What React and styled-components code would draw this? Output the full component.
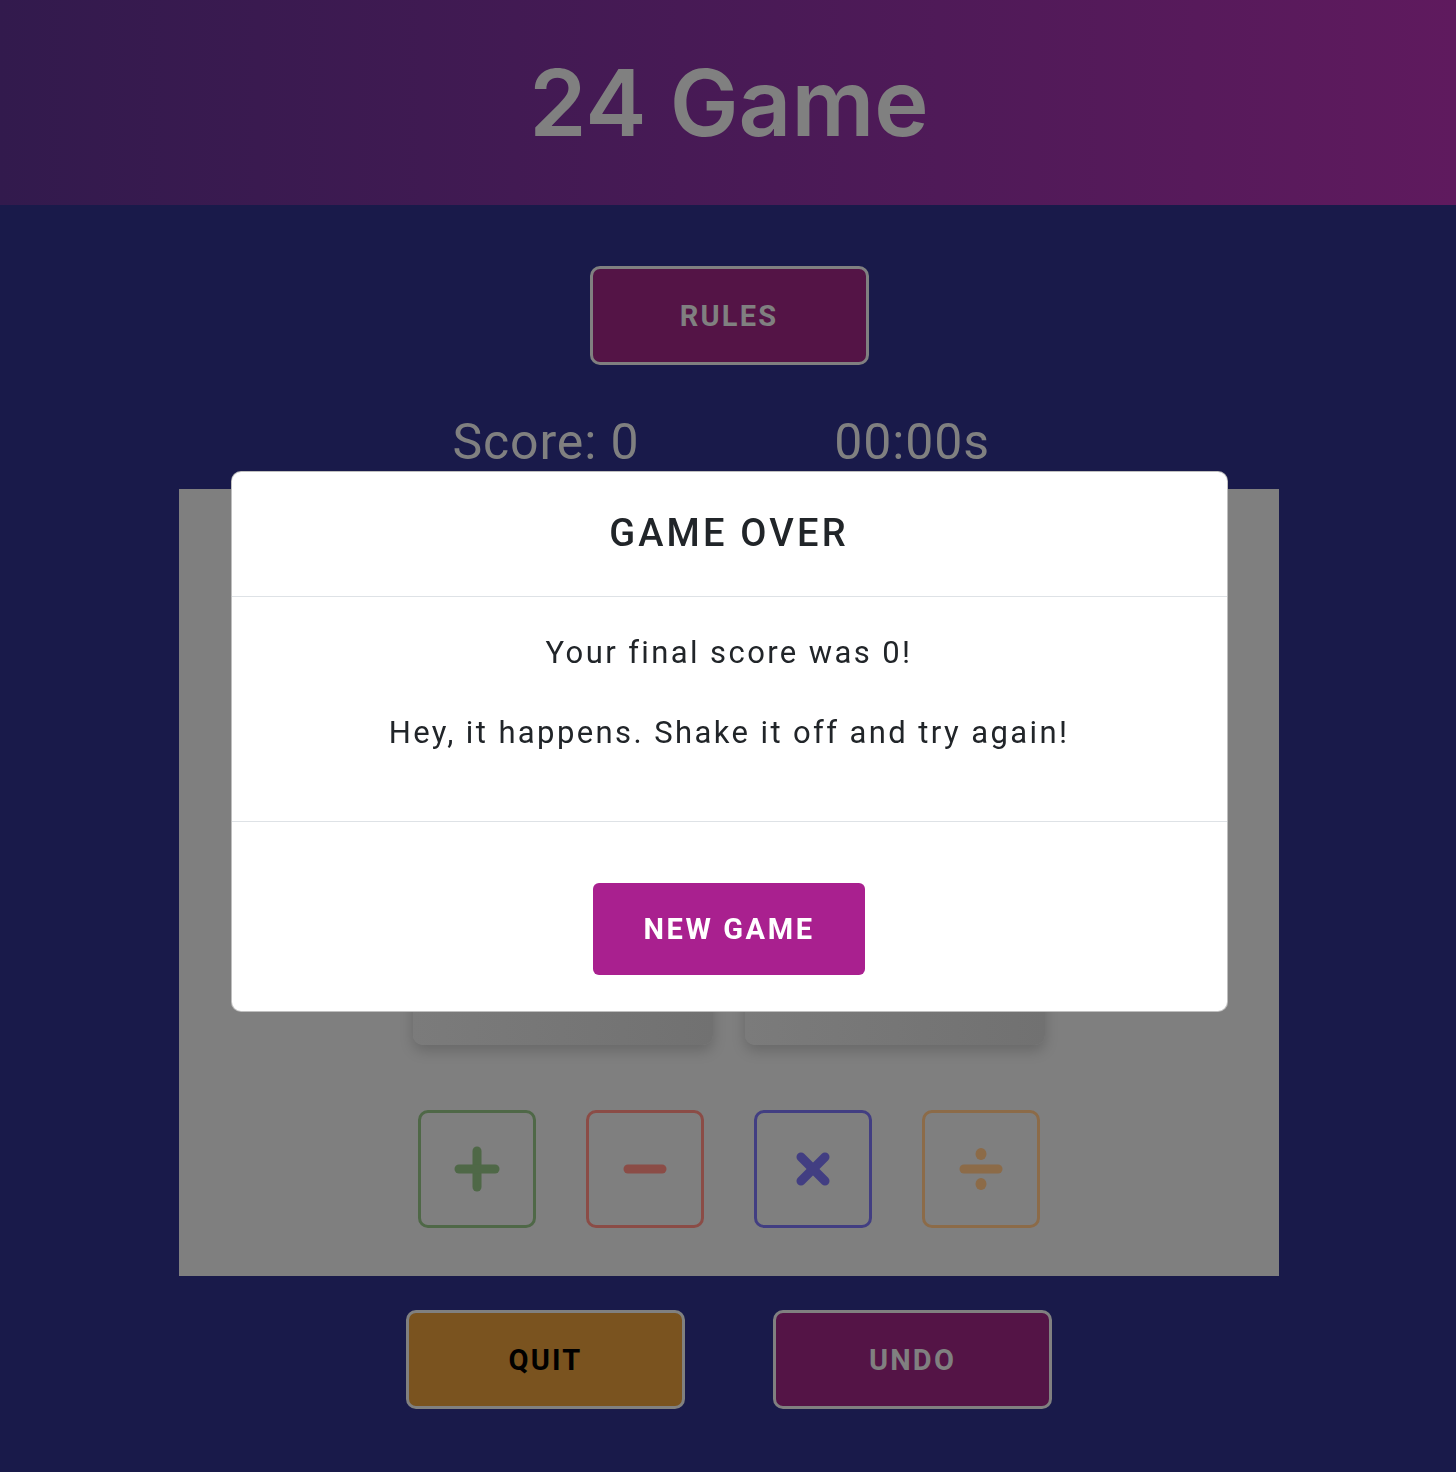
import React from "react";
import styled, { createGlobalStyle } from "styled-components";

const GlobalStyle = createGlobalStyle`
  body {
    margin: 0;
    background: #191a4a;
    font-family: Roboto, "Liberation Sans", sans-serif;
  }
`;

const Page = styled.div`
  min-height: 1472px;
  background: #191a4a;
`;

const Header = styled.header`
  height: 205px;
  display: flex;
  align-items: center;
  justify-content: center;
  padding-left: 2px;
  box-sizing: border-box;
  background: linear-gradient(to right, #321a4d, #5f1a5e);
`;

const Title = styled.h1`
  margin: 0;
  font-family: Inter, "Noto Sans", sans-serif;
  font-size: 92px;
  font-weight: 600;
  color: #808080;
  letter-spacing: 0;
`;

const Main = styled.main`
  display: flex;
  flex-direction: column;
  align-items: center;
  padding-left: 2px;
`;

const BigButton = styled.button`
  width: 279px;
  height: 99px;
  border: 3px solid #808080;
  border-radius: 10px;
  background: ${(p) => p.$bg};
  color: ${(p) => p.$fg};
  font-family: Roboto, sans-serif;
  font-size: 29px;
  font-weight: 700;
  letter-spacing: 2.2px;
  cursor: pointer;
`;

const RulesWrap = styled.div`
  margin-top: 61px;
`;

const ScoreRow = styled.div`
  margin-top: 47px;
  display: flex;
  gap: 66px;
`;

const Stat = styled.div`
  width: 300px;
  text-align: center;
  font-size: 50px;
  line-height: 60px;
  letter-spacing: 0.9px;
  color: #808080;
`;

const Board = styled.section`
  margin-top: 17px;
  width: 1100px;
  height: 787px;
  box-sizing: border-box;
  padding-top: 124px;
  background: #7f7f7f;
  display: flex;
  flex-direction: column;
  align-items: center;
`;

const CardGrid = styled.div`
  display: grid;
  grid-template-columns: 300px 300px;
  grid-auto-rows: 200px;
  gap: 32px;
`;

const Card = styled.div`
  border-radius: 10px;
  background: linear-gradient(to right, #7b7b7b, #717171);
  box-shadow: 0 6px 14px rgba(0, 0, 0, 0.18);
`;

const OpRow = styled.div`
  margin-top: 65px;
  display: flex;
  gap: 50px;
`;

const OpButton = styled.button`
  width: 118px;
  height: 118px;
  box-sizing: border-box;
  border: 3px solid ${(p) => p.$color};
  border-radius: 10px;
  background: transparent;
  display: flex;
  align-items: center;
  justify-content: center;
  padding: 0;
`;

const Controls = styled.div`
  margin-top: 34px;
  display: flex;
  gap: 88px;
`;

const Backdrop = styled.div`
  position: fixed;
  inset: 0;
  display: flex;
  justify-content: center;
  align-items: flex-start;
  padding-top: 471px;
  padding-left: 2px;
`;

const Modal = styled.div`
  width: 997px;
  background: #fff;
  border-radius: 10px;
  border: 1px solid rgba(0, 0, 0, 0.25);
  box-sizing: border-box;
  color: #212529;
  overflow: hidden;
`;

const ModalHeader = styled.div`
  height: 125px;
  box-sizing: border-box;
  padding-bottom: 2px;
  display: flex;
  align-items: center;
  justify-content: center;
  border-bottom: 1px solid #dee2e6;
`;

const ModalTitle = styled.h2`
  margin: 0;
  font-size: 38px;
  font-weight: 500;
  letter-spacing: 3.2px;
`;

const ModalBody = styled.div`
  padding: 33px 16px 31px;
  text-align: center;
  border-bottom: 1px solid #dee2e6;
`;

const Message = styled.p`
  margin: 0 0 35px;
  font-size: 31px;
  line-height: 45px;
  letter-spacing: 2.4px;
`;

const ModalFooter = styled.div`
  display: flex;
  justify-content: center;
  padding: 61px 0 36px;
`;

const NewGame = styled.button`
  width: 272px;
  height: 92px;
  border: none;
  border-radius: 6px;
  background: #a9208f;
  color: #fff;
  font-family: Roboto, sans-serif;
  font-size: 29px;
  font-weight: 700;
  letter-spacing: 2.6px;
`;

const OpIcon = ({ type, color }) => (
  <svg width="48" height="48" viewBox="0 0 48 48" fill="none" stroke={color} strokeWidth="9" strokeLinecap="round">
    {type === "add" && (
      <>
        <path d="M24 6v36" />
        <path d="M6 24h36" />
      </>
    )}
    {type === "sub" && <path d="M7 24h34" />}
    {type === "mul" && (
      <>
        <path d="M12 12l24 24" />
        <path d="M36 12L12 36" />
      </>
    )}
    {type === "div" && (
      <>
        <path d="M7 24h34" />
        <ellipse cx="24" cy="9" rx="5.5" ry="6" fill={color} stroke="none" />
        <ellipse cx="24" cy="39" rx="5.5" ry="6" fill={color} stroke="none" />
      </>
    )}
  </svg>
);

const ops = [
  { type: "add", color: "#4f6847" },
  { type: "sub", color: "#8b4c46" },
  { type: "mul", color: "#423e82" },
  { type: "div", color: "#8c6b48" },
];

const App = () => {
  return (
    <Page>
      <GlobalStyle />
      <Header>
        <Title>24 Game</Title>
      </Header>
      <Main>
        <RulesWrap>
          <BigButton $bg="#541446" $fg="#808080">RULES</BigButton>
        </RulesWrap>
        <ScoreRow>
          <Stat>Score: 0</Stat>
          <Stat>00:00s</Stat>
        </ScoreRow>
        <Board>
          <CardGrid>
            {[0, 1, 2, 3].map((i) => (
              <Card key={i} />
            ))}
          </CardGrid>
          <OpRow>
            {ops.map((op) => (
              <OpButton key={op.type} $color={op.color}>
                <OpIcon type={op.type} color={op.color} />
              </OpButton>
            ))}
          </OpRow>
        </Board>
        <Controls>
          <BigButton $bg="#7a531f" $fg="#000">QUIT</BigButton>
          <BigButton $bg="#541446" $fg="#808080">UNDO</BigButton>
        </Controls>
      </Main>
      <Backdrop>
        <Modal>
          <ModalHeader>
            <ModalTitle>GAME OVER</ModalTitle>
          </ModalHeader>
          <ModalBody>
            <Message>Your final score was 0!</Message>
            <Message>Hey, it happens. Shake it off and try again!</Message>
          </ModalBody>
          <ModalFooter>
            <NewGame>NEW GAME</NewGame>
          </ModalFooter>
        </Modal>
      </Backdrop>
    </Page>
  );
};

export default App;
